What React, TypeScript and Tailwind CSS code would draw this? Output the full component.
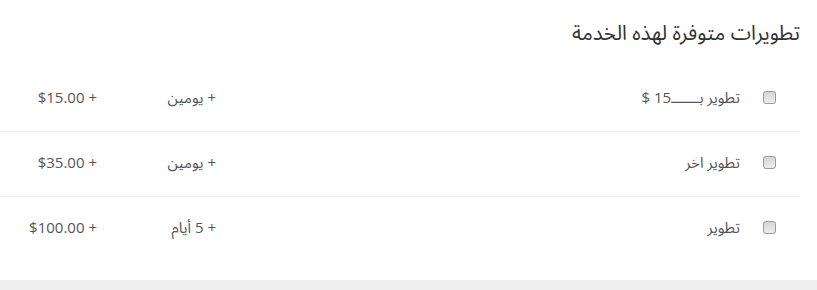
import React from "react";

const rows = [
  { label: "تطوير بـــــــ15 $", dur: "+ يومين", price: "+ $15.00" },
  { label: "تطوير اخر", dur: "+ يومين", price: "+ $35.00" },
  { label: "تطوير", dur: "+ 5 أيام", price: "+ $100.00" },
];

export default function App() {
  return (
    <div
      className="w-[817px] h-[290px] bg-white flex flex-col text-[#555]"
      style={{ fontFamily: '"Open Sans", "Noto Sans Arabic", "Noto Sans", "DejaVu Sans", sans-serif' }}
    >
      <div dir="rtl" className="w-[800px] flex-1">
        <h3 className="h-[67px] text-[20.5px] leading-[28px] text-[#333] pt-[18px]">
          تطويرات متوفرة لهذه الخدمة
        </h3>
        {rows.map((r, i) => (
          <div
            key={i}
            className={
              "grid grid-cols-[1fr_119px_97px] items-center h-[65px] pb-[4px] text-[15px] " +
              (i < rows.length - 1 ? "border-b border-[#eeeeee]" : "")
            }
          >
            <label className="flex items-center pr-[24px]">
              <input
                type="checkbox"
                className="appearance-none m-0 w-[13px] h-[13px] ml-[23px] rounded-[3px] border border-[#9a9a9a] bg-gradient-to-b from-[#d6d6d6] to-[#ececec]"
              />
              <span>{r.label}</span>
            </label>
            <div>{r.dur}</div>
            <div>{r.price}</div>
          </div>
        ))}
      </div>
      <div className="h-[10px] bg-[#efefef]" />
    </div>
  );
}
